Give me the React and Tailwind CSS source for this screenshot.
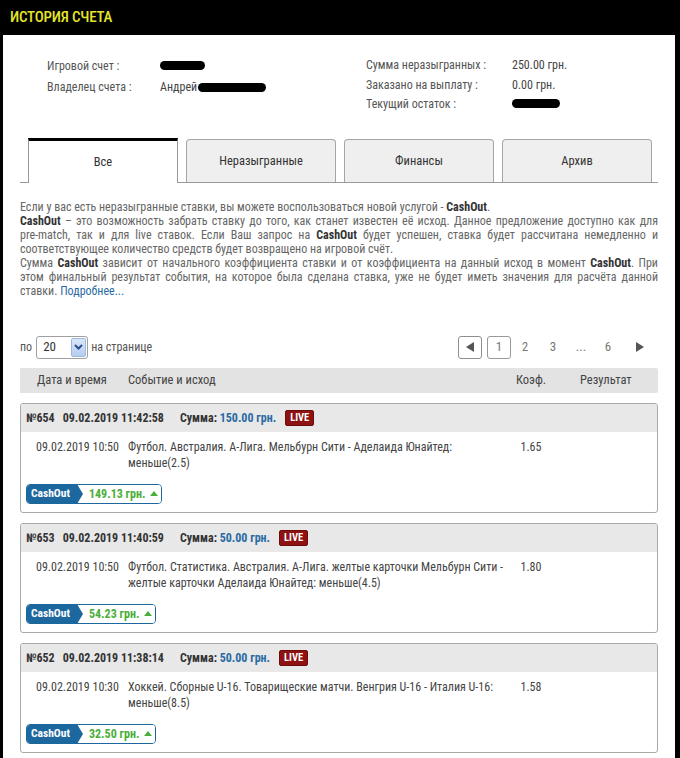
const bets = [
  {
    id: "№654",
    placed: "09.02.2019 11:42:58",
    sum: "150.00 грн.",
    date: "09.02.2019 10:50",
    event: "Футбол. Австралия. А-Лига. Мельбурн Сити - Аделаида Юнайтед: меньше(2.5)",
    coef: "1.65",
    cashout: "149.13 грн.",
  },
  {
    id: "№653",
    placed: "09.02.2019 11:40:59",
    sum: "50.00 грн.",
    date: "09.02.2019 10:50",
    event:
      "Футбол. Статистика. Австралия. А-Лига. желтые карточки Мельбурн Сити - желтые карточки Аделаида Юнайтед: меньше(4.5)",
    coef: "1.80",
    cashout: "54.23 грн.",
  },
  {
    id: "№652",
    placed: "09.02.2019 11:38:14",
    sum: "50.00 грн.",
    date: "09.02.2019 10:30",
    event: "Хоккей. Сборные U-16. Товарищеские матчи. Венгрия U-16 - Италия U-16: меньше(8.5)",
    coef: "1.58",
    cashout: "32.50 грн.",
  },
];

const tabs = ["Все", "Неразыгранные", "Финансы", "Архив"];

function Blot({ w }) {
  // redacted scribble
  return <span className={`inline-block h-[9px] bg-black rounded-full align-middle ${w}`} />;
}

function CashOutButton({ value }) {
  return (
    <div className="inline-flex h-[20px] items-stretch rounded-[4px] border border-[#1d679f] overflow-hidden">
      <span className="flex items-center bg-[#1d679f] pl-[4px] pr-[7px] text-[11.5px] font-bold text-white">
        CashOut
      </span>
      <span className="w-0 h-0 self-center border-y-[10px] border-y-transparent border-l-[6px] border-l-[#1d679f]" />
      <span className="flex items-center gap-[5px] pl-[6px] pr-[3px] text-[12px] font-bold text-[#4aae3a] bg-white">
        {value}
        <span className="w-0 h-0 border-x-[4px] border-x-transparent border-b-[5px] border-b-[#4aae3a]" />
      </span>
    </div>
  );
}

function BetCard({ bet }) {
  return (
    <div className="border border-[#a9a9a9] rounded-[3px] overflow-hidden">
      <div className="h-[28px] bg-[#e8e8e8] flex items-center pl-[5px] text-[12px] font-bold text-[#333]">
        <span>{bet.id}</span>
        <span className="ml-[8px]">{bet.placed}</span>
        <span className="ml-[16px]">
          Сумма: <span className="text-[#2a6ba3]">{bet.sum}</span>
        </span>
        <span className="ml-[9px] bg-[#8e1212] border border-[#6d0b0b] rounded-[2px] px-[4px] text-[10.5px] leading-[14px] text-white">
          LIVE
        </span>
      </div>
      <div className="grid grid-cols-[107px_379px_48px_1fr] pt-[7px] text-[12px] leading-[16px] text-[#444]">
        <div className="pl-[15px]">{bet.date}</div>
        <div>{bet.event}</div>
        <div className="text-center">{bet.coef}</div>
        <div />
      </div>
      <div className="pl-[5px] pt-[9px] pb-[8px]">
        <CashOutButton value={bet.cashout} />
      </div>
    </div>
  );
}

export default function App() {
  return (
    <div className="w-[680px] h-[758px] overflow-hidden bg-black font-['Roboto',sans-serif] font-stretch-condensed">
      {/* Title bar */}
      <div className="h-[35px] flex items-center pl-[10px]">
        <h1 className="text-[15px] font-medium text-[#e5e52a] tracking-[-0.2px]">ИСТОРИЯ СЧЕТА</h1>
      </div>

      <div className="ml-[3px] mr-[5px] h-[723px] bg-white px-[17px]">
        {/* Account info */}
        <div className="flex pt-[20px] text-[12px] text-[#555]">
          <div className="w-[346px] pl-[27px]">
            <div className="flex h-[21px] items-center">
              <span className="w-[113px]">Игровой счет :</span>
              <Blot w="w-[45px]" />
            </div>
            <div className="flex h-[22px] items-center">
              <span className="w-[113px]">Владелец счета :</span>
              <span className="text-[#444]">Андрей</span>
              <Blot w="w-[68px] ml-[1px]" />
            </div>
          </div>
          <div>
            <div className="flex h-[20px] items-center">
              <span className="w-[146px]">Сумма неразыгранных :</span>
              <span className="text-[#444]">250.00 грн.</span>
            </div>
            <div className="flex h-[19px] items-center">
              <span className="w-[146px]">Заказано на выплату :</span>
              <span className="text-[#444]">0.00 грн.</span>
            </div>
            <div className="flex h-[19px] items-center">
              <span className="w-[146px]">Текущий остаток :</span>
              <Blot w="w-[48px]" />
            </div>
          </div>
        </div>

        {/* Tabs */}
        <div className="mt-[25px] flex items-end gap-[8px] pl-[8px] h-[45px] border-b border-[#9a9a9a]">
          {tabs.map((t, i) =>
            i === 0 ? (
              <div
                key={t}
                className="-mb-px h-[45px] w-[150px] flex items-center justify-center bg-white border-x border-[#999] border-t-[3px] border-t-black text-[12.5px] text-[#333]"
              >
                {t}
              </div>
            ) : (
              <div
                key={t}
                className="h-[43px] w-[150px] flex items-center justify-center bg-[#efefef] border border-b-0 border-[#a5a5a5] rounded-t-[4px] text-[12.5px] text-[#333]"
              >
                {t}
              </div>
            )
          )}
        </div>

        {/* Info text */}
        <p className="mt-[17px] text-[12px] leading-[14px] text-[#666] text-justify">
          Если у вас есть неразыгранные ставки, вы можете воспользоваться новой услугой -{" "}
          <b className="text-[#333]">CashOut</b>.
          <br />
          <b className="text-[#333]">CashOut</b> – это возможность забрать ставку до того, как станет известен её
          исход. Данное предложение доступно как для <span className="whitespace-nowrap">pre-match,</span> так и для
          live ставок. Если Ваш запрос на <b className="text-[#333]">CashOut</b> будет успешен, ставка будет
          рассчитана немедленно и соответствующее количество средств будет возвращено на игровой счёт.
          <br />
          Сумма <b className="text-[#333]">CashOut</b> зависит от начального коэффициента ставки и от коэффициента на
          данный исход в момент <b className="text-[#333]">CashOut</b>. При этом финальный результат события, на
          которое была сделана ставка, уже не будет иметь значения для расчёта данной ставки.{" "}
          <span className="text-[#2a6ba3]">Подробнее...</span>
        </p>

        {/* Page size + pagination */}
        <div className="mt-[37px] flex items-center justify-between h-[24px]">
          <div className="flex items-center text-[12px] text-[#555]">
            <span>по</span>
            <div className="ml-[4px] h-[23px] w-[52px] flex items-center justify-between border border-[#a0a0a0] rounded-[3px] pl-[6px] pr-[1px] text-[13px] text-[#333]">
              20
              <span className="h-[19px] w-[15px] rounded-[2px] bg-gradient-to-b from-[#dbe6f8] to-[#b5cdf0] border border-[#9fb8de] flex items-center justify-center">
                <svg width="9" height="6" viewBox="0 0 9 6">
                  <path d="M1 1l3.5 3.5L8 1" stroke="#2b4f8c" strokeWidth="2" fill="none" />
                </svg>
              </span>
            </div>
            <span className="ml-[3px]">на странице</span>
          </div>
          <div className="flex items-center text-[13px] text-[#777] mr-[14px]">
            <span className="h-[23px] w-[24px] flex items-center justify-center border border-[#8f8f8f] rounded-[3px]">
              <span className="w-0 h-0 border-y-[5px] border-y-transparent border-r-[8px] border-r-[#555]" />
            </span>
            <span className="ml-[5px] h-[23px] w-[24px] flex items-center justify-center border border-[#9a9a9a] rounded-[3px] text-[#777]">
              1
            </span>
            <span className="ml-[5px] w-[18px] text-center">2</span>
            <span className="ml-[10px] w-[18px] text-center">3</span>
            <span className="ml-[10px] w-[18px] text-center">...</span>
            <span className="ml-[9px] w-[18px] text-center">6</span>
            <span className="ml-[19px] w-0 h-0 border-y-[5px] border-y-transparent border-l-[8px] border-l-[#555]" />
          </div>
        </div>

        {/* Table header */}
        <div className="mt-[9px] h-[25px] bg-[#e3e3e3] grid grid-cols-[108px_379px_48px_1fr] items-center text-[12.5px] text-[#444] rounded-r-[2px]">
          <div className="pl-[17px]">Дата и время</div>
          <div>Событие и исход</div>
          <div className="text-center">Коэф.</div>
          <div className="pl-[25px]">Результат</div>
        </div>

        {/* Bets */}
        <div className="mt-[10px] flex flex-col gap-[10px]">
          {bets.map((b) => (
            <BetCard key={b.id} bet={b} />
          ))}
        </div>
      </div>
    </div>
  );
}
